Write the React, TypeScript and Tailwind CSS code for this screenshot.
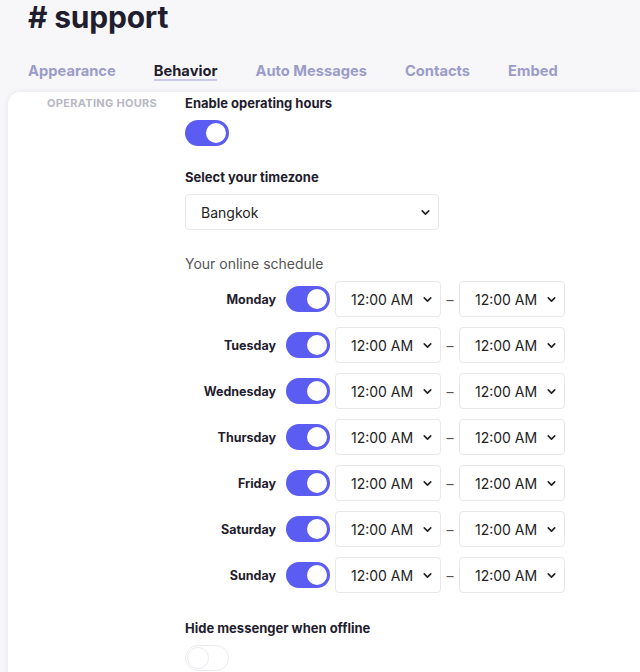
import { ChevronDown } from 'lucide-react'

const days = ['Monday', 'Tuesday', 'Wednesday', 'Thursday', 'Friday', 'Saturday', 'Sunday']
const tabs = ['Appearance', 'Behavior', 'Auto Messages', 'Contacts', 'Embed']

function Toggle({ on }: { on: boolean }) {
    if (!on) {
        return (
            <div className="w-[44px] h-[26px] rounded-full bg-white border border-[#ececf0] flex items-center px-[1px]">
                <div className="w-[22px] h-[22px] rounded-full bg-white border border-[#ececf0]" />
            </div>
        )
    }
    return (
        <div className="w-[44px] h-[26px] rounded-full bg-[#5a5cf2] flex items-center justify-end px-[3px]">
            <div className="w-[20px] h-[20px] rounded-full bg-white" />
        </div>
    )
}

function Select({ value, className }: { value: string; className: string }) {
    return (
        <div className={`h-[36px] bg-white border border-[#e8e8ec] rounded-[4px] flex items-center justify-between pl-[15px] pr-[6px] text-[14px] text-[#222] ${className}`}>
            <span>{value}</span>
            <ChevronDown className="h-[13px] w-[13px] text-[#222]" strokeWidth={3} />
        </div>
    )
}

export default function App() {
    return (
        <div className="h-[672px] overflow-hidden bg-[#f7f7f9] font-['Inter',sans-serif] text-[#1f1d2e]">
            {/* Title */}
            <h1 className="pl-[28px] text-[30px] leading-[34px] font-bold tracking-[-0.2px]">
                # support
            </h1>

            {/* Tabs */}
            <div className="flex gap-[38px] pl-[28px] mt-[24px]">
                {tabs.map((t) => (
                    <div key={t} className="relative">
                        <span className={`text-[14.7px] font-bold leading-[20px] ${t === 'Behavior' ? 'text-[#1f1d2e]' : 'text-[#9c9cc9]'}`}>
                            {t}
                        </span>
                        {t === 'Behavior' && (
                            <div className="absolute left-0 right-0 top-[21px] h-[2px] bg-[#c9c9ea]" />
                        )}
                    </div>
                ))}
            </div>

            {/* Card */}
            <div className="ml-[8px] mt-[10px] bg-white rounded-tl-[12px] shadow-[0_0_6px_rgba(0,0,0,0.08)] h-[600px] flex">
                <div className="w-[177px] shrink-0 pl-[39px] pt-[1px] text-[11px] leading-[20px]">
                    <span className="font-bold uppercase tracking-[0.3px] text-[#b8b8c2]">Operating hours</span>
                </div>

                <div className="pt-[1px] flex flex-col">
                    <div className="text-[13px] font-bold leading-[20px]">Enable operating hours</div>
                    <div className="mt-[7px]">
                        <Toggle on />
                    </div>

                    <div className="mt-[21px] text-[13px] font-bold leading-[20px]">Select your timezone</div>
                    <Select value="Bangkok" className="w-[254px] mt-[7px]" />

                    <div className="mt-[24px] text-[14px] leading-[20px] text-[#555]">Your online schedule</div>

                    <div className="mt-[7px] flex flex-col gap-[10px]">
                        {days.map((d) => (
                            <div key={d} className="flex items-center">
                                <div className="w-[101px] text-right text-[12.5px] leading-[20px] pt-[2px] font-bold pr-[10px]">{d}</div>
                                <Toggle on />
                                <Select value="12:00 AM" className="w-[106px] ml-[5px]" />
                                <span className="w-[18px] text-center text-[#555] text-[14px]">–</span>
                                <Select value="12:00 AM" className="w-[106px]" />
                            </div>
                        ))}
                    </div>

                    <div className="mt-[25px] text-[13px] font-bold leading-[20px]">Hide messenger when offline</div>
                    <div className="mt-[7px]">
                        <Toggle on={false} />
                    </div>
                </div>
            </div>
        </div>
    )
}
